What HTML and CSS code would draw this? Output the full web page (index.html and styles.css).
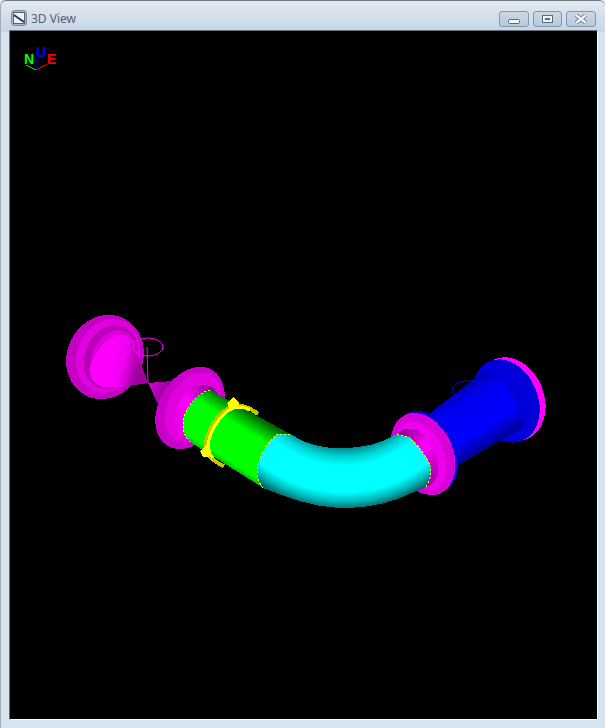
FILE: index.html
```html
<!DOCTYPE html>
<html>
  <head>
    <meta charset="UTF-8">
    <title>3D View</title>
    <link rel="stylesheet" href="styles.css">
  </head>
  <body>
  <div class="window">
    <div class="titlebar">
      <svg class="appicon" width="16" height="16" viewBox="0 0 16 16">
        <rect x="0.5" y="0.5" width="15" height="15" rx="3" fill="#a9b8c8" stroke="#7d8a99"/>
        <rect x="2.5" y="2.5" width="11" height="11" fill="#eef3f8" stroke="#4f6478"/>
        <path d="M3 5 L13 12" stroke="#2c3a47" stroke-width="2"/>
      </svg>
      <span class="title">3D View</span>
      <div class="buttons">
        <div class="btn btn-min">
          <svg width="12" height="6" viewBox="0 0 12 6"><rect x="0.5" y="0.5" width="11" height="4" rx="1" fill="#f2f5f8" stroke="#5c6a79"/></svg>
        </div>
        <div class="btn btn-max">
          <svg width="12" height="9" viewBox="0 0 12 9"><rect x="0.5" y="0.5" width="10" height="7" fill="#f2f5f8" stroke="#5c6a79"/><rect x="3" y="3" width="5" height="2" fill="#5c6a79"/></svg>
        </div>
        <div class="btn btn-close">
          <svg width="14" height="10" viewBox="0 0 14 10"><path d="M2 1 L12 9 M12 1 L2 9" stroke="#5c6a79" stroke-width="4"/><path d="M2 1 L12 9 M12 1 L2 9" stroke="#f4f6f8" stroke-width="2.4"/></svg>
        </div>
      </div>
    </div>
    <div class="view">
      <svg class="scene" width="587" height="688" viewBox="10 31 587 688">
        <defs>
          <linearGradient id="coneA" gradientUnits="userSpaceOnUse" x1="112" y1="345" x2="142" y2="352">
            <stop offset="0" stop-color="#ff00ff"/>
            <stop offset="0.5" stop-color="#f000f0"/>
            <stop offset="1" stop-color="#a000a0"/>
          </linearGradient>
          <linearGradient id="coneB" gradientUnits="userSpaceOnUse" x1="150" y1="385" x2="170" y2="395">
            <stop offset="0" stop-color="#d000d0"/>
            <stop offset="1" stop-color="#8a008a"/>
          </linearGradient>
          <linearGradient id="neck" gradientUnits="userSpaceOnUse" x1="203" y1="385" x2="178" y2="430">
            <stop offset="0" stop-color="#8a008a"/>
            <stop offset="0.55" stop-color="#ff00ff"/>
            <stop offset="1" stop-color="#e800e8"/>
          </linearGradient>
          <linearGradient id="green" gradientUnits="userSpaceOnUse" x1="250" y1="412" x2="218" y2="463">
            <stop offset="0" stop-color="#006800"/>
            <stop offset="0.18" stop-color="#00c800"/>
            <stop offset="0.3" stop-color="#00ff00"/>
            <stop offset="0.87" stop-color="#00ff00"/>
            <stop offset="1" stop-color="#009800"/>
          </linearGradient>
          <radialGradient id="cyan" gradientUnits="userSpaceOnUse" cx="344" cy="360" r="149">
            <stop offset="0.59" stop-color="#008c8c"/>
            <stop offset="0.65" stop-color="#00d4d4"/>
            <stop offset="0.71" stop-color="#00ffff"/>
            <stop offset="0.89" stop-color="#00ffff"/>
            <stop offset="0.95" stop-color="#00baba"/>
            <stop offset="1" stop-color="#006c6c"/>
          </radialGradient>
          <linearGradient id="blue" gradientUnits="userSpaceOnUse" x1="448" y1="385" x2="488" y2="452">
            <stop offset="0" stop-color="#000090"/>
            <stop offset="0.3" stop-color="#0000f0"/>
            <stop offset="0.7" stop-color="#0000ff"/>
            <stop offset="1" stop-color="#000080"/>
          </linearGradient>
          <linearGradient id="neckR" gradientUnits="userSpaceOnUse" x1="420" y1="425" x2="442" y2="475">
            <stop offset="0" stop-color="#900090"/>
            <stop offset="0.5" stop-color="#ff00ff"/>
            <stop offset="1" stop-color="#b000b0"/>
          </linearGradient>
        </defs>

        <!-- axis marker -->
        <path class="thin" d="M36 70 L36 57" stroke="#0000ff"/>
        <path class="thin" d="M36 70 L26 65" stroke="#00ff00"/>
        <path class="thin" d="M36 70 L47 64" stroke="#ff0000"/>
        <text class="axis" x="24" y="64" fill="#00ff00">N</text>
        <text class="axis" x="36" y="57" fill="#0000ff">U</text>
        <text class="axis" x="47" y="64" fill="#ff0000">E</text>

        <!-- left flange and cone -->
        <ellipse fill="#c400c4" cx="105" cy="357" rx="38" ry="43" transform="rotate(25 105 357)"/>
        <ellipse fill="#e000e0" cx="108" cy="356" rx="31" ry="38" transform="rotate(25 108 356)"/>
        <ellipse fill="#b800b8" cx="111" cy="357" rx="26" ry="33" transform="rotate(25 111 357)"/>
        <ellipse fill="#dc00dc" cx="113" cy="358" rx="21" ry="29" transform="rotate(25 113 358)"/>
        <path fill="url(#coneA)" d="M148 383 L133 342 C127 330 110 335 100 348 C90 360 86 375 95 383 C100 388 110 388 120 387 Z"/>

        <!-- pole with ring -->
        <ellipse class="thin" cx="148" cy="347" rx="15" ry="9" stroke="#ff00ff"/>
        <path class="thin" d="M147 347 L148 383" stroke="#ff00ff"/>

        <!-- second cone and flange -->
        <path fill="url(#coneB)" d="M148 383 L172 381 L158 404 Z"/>
        <ellipse fill="#c800c8" cx="190" cy="408" rx="31" ry="44" transform="rotate(30 190 408)"/>
        <ellipse fill="#e000e0" cx="193" cy="407" rx="25" ry="37" transform="rotate(30 193 407)"/>
        <ellipse fill="url(#neck)" cx="197" cy="412" rx="20" ry="29" transform="rotate(30 197 412)"/>

        <!-- far flange, behind the blue run -->
        <ellipse fill="#ff00ff" cx="511" cy="399" rx="33" ry="43" transform="rotate(-22 511 399)"/>
        <ellipse fill="#0000d8" cx="506" cy="401" rx="32" ry="43" transform="rotate(-22 506 401)"/>

        <!-- blue pipe -->
        <path fill="url(#blue)" d="M430 413 L478 376 C490 368 505 380 512 395 C520 410 525 420 522 428 L457 466 Z"/>
        <ellipse class="thin" cx="468" cy="390" rx="16" ry="9" stroke="#0000ff"/>
        <path class="thin" d="M467 390 L467 398" stroke="#0000ff"/>

        <!-- flange between cyan and blue -->
        <ellipse fill="#0000e0" cx="426" cy="452" rx="30" ry="43" transform="rotate(-24 426 452)"/>
        <ellipse fill="#d800d8" cx="423" cy="454" rx="30" ry="43" transform="rotate(-24 423 454)"/>
        <ellipse fill="#ee00ee" cx="420" cy="456" rx="24" ry="36" transform="rotate(-24 420 456)"/>
        <ellipse fill="url(#neckR)" cx="416" cy="458" rx="20" ry="31" transform="rotate(-24 416 458)"/>

        <!-- green run -->
        <path fill="url(#green)" d="M210 390 L290 434 L262 487 L190 442 C186 438 183 432 183 425 C183 410 196 393 210 390 Z"/>
        <path class="dots" d="M210 390 C196 393 183 410 183 425 C183 432 186 438 190 442"/>

        <!-- yellow ring -->
        <path class="ring-back" d="M258 414 C248 406 238 404 231 407 C217 414 206 432 206 446 C207 456 214 462 224 466"/>
        <path class="ring-front" d="M250 410 C240 405 234 407 229 410 C218 418 209 433 208 446 C208 451 210 455 213 458"/>
        <path fill="#ffff00" d="M233 397 L239 403 L238 408 L229 408 L227 403 Z"/>
        <path fill="#ffff00" d="M206 445 L211 450 L209 457 L203 457 L200 451 Z"/>

        <!-- cyan bend -->
        <path fill="url(#cyan)" d="M278 434 L290 434 C308 446 328 449 344 448 C362 448 380 444 397 434 L409 437 C418 445 430 460 431 470 C431 478 428 484 425 488 L416 491 C395 502 368 509 340 508 C312 507 285 497 263 488 C259 483 257 478 257 470 C258 458 268 440 278 434 Z"/>
        <path class="dots" d="M290 434 L278 434 C268 440 258 458 257 470 C257 478 259 483 263 488 M397 434 L409 437 C418 445 430 460 431 470 C431 478 428 484 425 488"/>
      </svg>
    </div>
  </div>
  </body>
</html>
```

FILE: styles.css
```css
html, body {
  margin: 0;
  padding: 0;
  background-color: #e9edf1;
}

.window {
  width: 605px;
  height: 728px;
  box-sizing: border-box;
  display: flex;
  flex-direction: column;
  padding: 0 7px 7px 8px;
  border-top: 1px solid #6f7680;
  border-left: 1px solid #a4adb7;
  border-radius: 6px 6px 0 0;
  background: linear-gradient(to bottom, #e2e9f1 0, #c6d6e7 30px, #d6e4f1 32px, #d6e4f1 100%);
}

.titlebar {
  height: 29px;
  display: flex;
  align-items: center;
  flex-shrink: 0;
}

.appicon {
  margin-left: 2px;
  margin-top: 4px;
}

.title {
  margin-left: 4px;
  margin-top: 6px;
  font-family: "Noto Sans", sans-serif;
  font-size: 12px;
  color: #56606b;
}

.buttons {
  margin-left: auto;
  margin-right: 2px;
  margin-top: 7px;
  display: flex;
  gap: 4px;
}

.btn {
  width: 28px;
  height: 14px;
  display: flex;
  align-items: center;
  justify-content: center;
  border: 1px solid #8496ae;
  border-radius: 3px;
  background: linear-gradient(to bottom, #cbd8e6, #b8c9dc);
}

.btn-max {
  width: 27px;
}

.btn-min svg {
  margin-top: 6px;
}

.view {
  width: 587px;
  height: 688px;
  background-color: #000;
  border: 1px solid;
  border-color: #6a7078 #fff #fff #6a7078;
}

.scene {
  display: block;
  shape-rendering: crispEdges;
}

.thin {
  fill: none;
  stroke-width: 1;
  shape-rendering: auto;
}

.ring-back {
  fill: none;
  stroke: #c4c400;
  stroke-width: 4;
}

.ring-front {
  fill: none;
  stroke: #ffff00;
  stroke-width: 3;
}

.dots {
  fill: none;
  stroke: #ffff00;
  stroke-width: 1;
  stroke-dasharray: 2 2;
}

.axis {
  font-family: "Liberation Sans", sans-serif;
  font-size: 14px;
  font-weight: bold;
}
```
